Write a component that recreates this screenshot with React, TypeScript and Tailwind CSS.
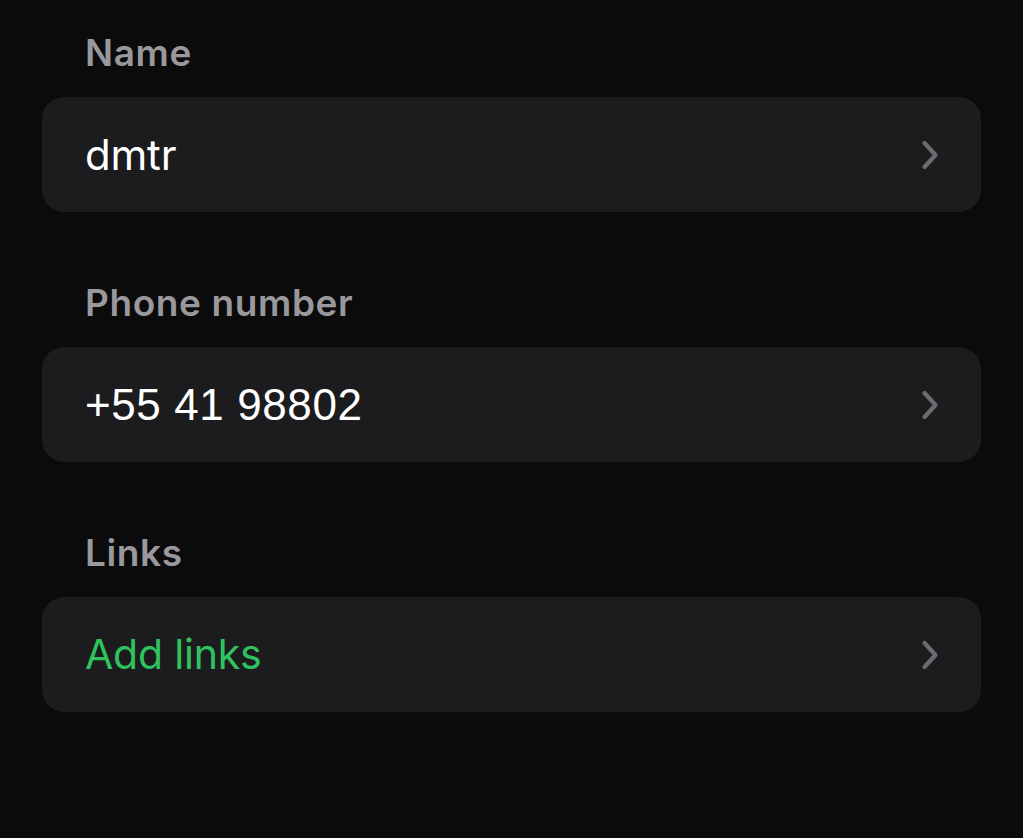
import React from "react";

function Chevron() {
  return (
    <svg width="20" height="32" viewBox="0 0 20 32" fill="none" className="shrink-0">
      <path d="M4.5 4 L15.5 16 L4.5 28" stroke="#6c6c70" strokeWidth="4.2" strokeLinecap="round" strokeLinejoin="round" />
    </svg>
  );
}

function Section({ label, children }: { label: string; children: React.ReactNode }) {
  return (
    <div className="flex flex-col">
      <div className="pl-[43px] text-[37px] leading-[44px] font-semibold text-[#98989d] tracking-[0.6px]">{label}</div>
      <div className="mt-[22px] h-[115px] rounded-[22px] bg-[#1c1c1e] flex items-center justify-between pl-[43px] pr-[41px]">
        {children}
        <Chevron />
      </div>
    </div>
  );
}

export default function App() {
  return (
    <div
      className="w-[1023px] h-[838px] bg-[#0b0b0b] px-[42px] pt-[31px] flex flex-col gap-[69px] overflow-hidden"
      style={{ fontFamily: "Inter, 'Noto Sans', sans-serif" }}
    >
      <Section label="Name">
        <span className="text-[42px] leading-none text-white tracking-[-0.2px]">dmtr</span>
      </Section>
      <Section label="Phone number">
        <span
          className="text-[44px] leading-none text-white tracking-[0.6px]"
          style={{ fontFamily: "'Liberation Sans', Arial, sans-serif" }}
        >
          +55 41 98802
        </span>
      </Section>
      <Section label="Links">
        <span className="text-[41px] leading-none text-[#30c25f] tracking-[-0.2px]">Add links</span>
      </Section>
    </div>
  );
}
